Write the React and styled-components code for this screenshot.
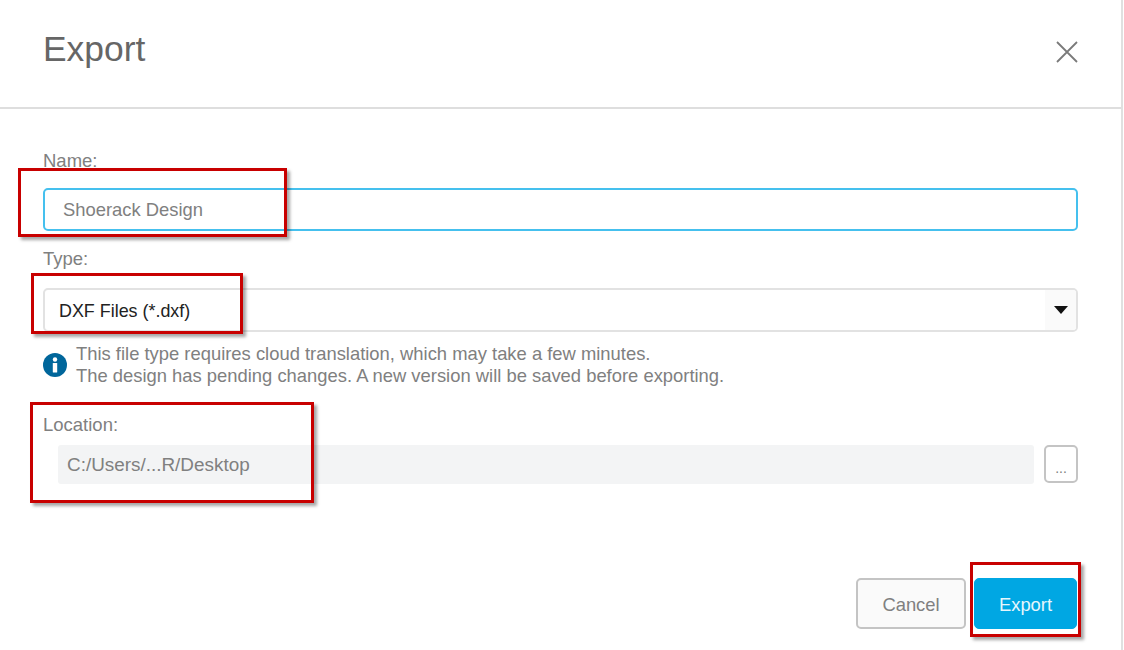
import React from "react";
import styled, { createGlobalStyle } from "styled-components";

const GlobalStyle = createGlobalStyle`
  html, body {
    margin: 0;
    padding: 0;
    background: #fff;
  }
  body {
    font-family: "Liberation Sans", Arial, sans-serif;
  }
`;

const Dialog = styled.main`
  position: relative;
  width: 1123px;
  height: 650px;
  box-sizing: border-box;
  border-right: 2px solid #e0e0e0;
  background: #fff;
  overflow: hidden;
`;

const Header = styled.header`
  height: 109px;
  box-sizing: border-box;
  border-bottom: 2px solid #dedede;
  padding: 29px 42px 0 43px;
  display: flex;
  justify-content: space-between;
  align-items: flex-start;
`;

const Title = styled.h1`
  margin: 0;
  font-size: 35.4px;
  line-height: 40px;
  font-weight: 400;
  color: #666;
`;

const CloseIcon = styled.svg`
  margin-top: 11px;
  width: 24px;
  height: 24px;
  stroke: #7a7a7a;
  stroke-width: 1.8;
  fill: none;
`;

const Form = styled.form`
  padding: 42px 43px 0 43px;
  display: flex;
  flex-direction: column;
`;

const Label = styled.label`
  display: block;
  font-size: 18.5px;
  line-height: 20px;
  color: #808080;
  margin-bottom: ${(p) => p.$gap}px;
`;

const NameInput = styled.div`
  height: 43px;
  box-sizing: border-box;
  border: 2px solid #45c0ee;
  border-radius: 5px;
  padding-left: 18px;
  display: flex;
  align-items: center;
  font-size: 18.4px;
  color: #808080;
  margin-bottom: 18px;
`;

const Select = styled.div`
  height: 44px;
  box-sizing: border-box;
  border: 2px solid #e2e2e2;
  border-radius: 5px;
  padding-left: 14px;
  display: flex;
  align-items: center;
  justify-content: space-between;
  font-size: 17.9px;
  color: #222;
  overflow: hidden;
`;

const SelectValue = styled.span`
  padding-top: 2px;
`;

const SelectArrow = styled.span`
  align-self: stretch;
  width: 31px;
  background: #fafafa;
  display: flex;
  align-items: center;
  justify-content: center;
  &::after {
    content: "";
    border-left: 7px solid transparent;
    border-right: 7px solid transparent;
    border-top: 8px solid #111;
  }
`;

const Info = styled.div`
  display: flex;
  align-items: center;
  gap: 9px;
  margin-top: 11px;
  margin-bottom: 28px;
`;

const InfoText = styled.p`
  margin: 0;
  font-size: 18.4px;
  line-height: 22px;
  color: #808080;
`;

const LocationRow = styled.div`
  display: flex;
  align-items: flex-start;
  gap: 10px;
  padding-left: 15px;
`;

const LocationField = styled.div`
  flex: 1;
  height: 39px;
  box-sizing: border-box;
  background: #f3f4f5;
  border-radius: 3px;
  padding-left: 9px;
  display: flex;
  align-items: center;
  font-size: 18.9px;
  color: #808080;
`;

const BrowseButton = styled.button`
  width: 34px;
  height: 38px;
  box-sizing: border-box;
  padding: 8px 0 0;
  background: #fff;
  border: 2px solid #c4c4c4;
  border-radius: 5px;
  font: 14px "Liberation Sans", Arial, sans-serif;
  color: #808080;
`;

const Footer = styled.footer`
  display: flex;
  justify-content: flex-end;
  gap: 8px;
  margin-top: 94px;
  padding-right: 1px;
`;

const Button = styled.button`
  width: ${(p) => p.$width}px;
  height: 51px;
  box-sizing: border-box;
  padding: 3px 0 0;
  border-radius: 5px;
  font: 18.4px "Liberation Sans", Arial, sans-serif;
  color: ${(p) => (p.$primary ? "#e6f6fc" : "#808080")};
  background: ${(p) => (p.$primary ? "#00a7e3" : "#fafafa")};
  border: ${(p) => (p.$primary ? "1px solid #00a7e3" : "2px solid #c4c4c4")};
`;

// the red boxes are drawn on top of the dialog, so they sit at their pixel spot
const Callout = styled.div`
  position: absolute;
  left: ${(p) => p.$x}px;
  top: ${(p) => p.$y}px;
  width: ${(p) => p.$w}px;
  height: ${(p) => p.$h}px;
  box-sizing: border-box;
  border: 3px solid #c80000;
  box-shadow: 3px 3px 3px rgba(0, 0, 0, 0.35);
`;

const InfoIcon = () => (
  <svg width="24" height="24" viewBox="0 0 24 24">
    <circle cx="12" cy="12" r="12" fill="#00669b" />
    <circle cx="12" cy="6.5" r="2.2" fill="#fff" />
    <rect x="9.8" y="10" width="4.4" height="9.5" rx="0.6" fill="#fff" />
  </svg>
);

const App = () => {
  return (
    <Dialog>
      <GlobalStyle />
      <Header>
        <Title>Export</Title>
        <CloseIcon viewBox="0 0 24 24">
          <path d="M2 2 L22 22 M22 2 L2 22" />
        </CloseIcon>
      </Header>
      <Form>
        <Label $gap={17}>Name:</Label>
        <NameInput>Shoerack Design</NameInput>
        <Label $gap={19}>Type:</Label>
        <Select>
          <SelectValue>DXF Files (*.dxf)</SelectValue>
          <SelectArrow />
        </Select>
        <Info>
          <InfoIcon />
          <InfoText>
            This file type requires cloud translation, which may take a few minutes.
            <br />
            The design has pending changes. A new version will be saved before exporting.
          </InfoText>
        </Info>
        <Label $gap={10}>Location:</Label>
        <LocationRow>
          <LocationField>C:/Users/...R/Desktop</LocationField>
          <BrowseButton type="button">...</BrowseButton>
        </LocationRow>
        <Footer>
          <Button type="button" $width={110}>Cancel</Button>
          <Button type="button" $width={103} $primary>Export</Button>
        </Footer>
      </Form>
      <Callout $x={18} $y={168} $w={269} $h={69} />
      <Callout $x={31} $y={273} $w={212} $h={61} />
      <Callout $x={30} $y={402} $w={284} $h={101} />
      <Callout $x={970} $y={562} $w={111} $h={75} />
    </Dialog>
  );
};

export default App;
